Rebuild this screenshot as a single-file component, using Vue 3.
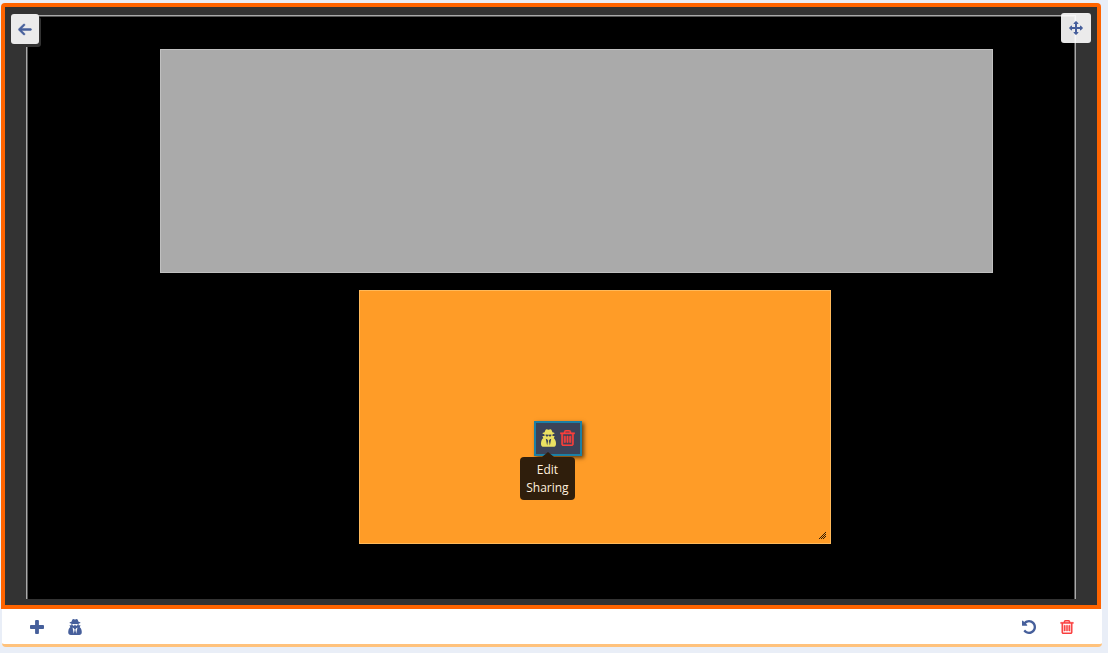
<script setup>
const icons = {
  back: {
    box: '-16 0 480 512',
    d: 'M9.4 233.4c-12.5 12.5-12.5 32.8 0 45.3l160 160c12.5 12.5 32.8 12.5 45.3 0s12.5-32.8 0-45.3L109.2 288 416 288c17.7 0 32-14.3 32-32s-14.3-32-32-32l-306.7 0L214.6 118.6c12.5-12.5 12.5-32.8 0-45.3s-32.8-12.5-45.3 0l-160 160z'
  },
  move: {
    box: '0 0 1792 1792',
    d: 'M1792 896q0 26-19 45l-256 256q-19 19-45 19t-45-19-19-45v-128h-384v384h128q26 0 45 19t19 45-19 45l-256 256q-19 19-45 19t-45-19l-256-256q-19-19-19-45t19-45 45-19h128v-384h-384v128q0 26-19 45t-45 19-45-19l-256-256q-19-19-19-45t19-45l256-256q19-19 45-19t45 19 19 45v128h384v-384h-128q-26 0-45-19t-19-45 19-45l256-256q19-19 45-19t45 19l256 256q19 19 19 45t-19 45-45 19h-128v384h384v-128q0-26 19-45t45-19 45 19l256 256q19 19 19 45z'
  },
  plus: {
    box: '192 192 1408 1408',
    d: 'M1600 800v192q0 40-28 68t-68 28h-416v416q0 40-28 68t-68 28h-192q-40 0-68-28t-28-68v-416h-416q-40 0-68-28t-28-68v-192q0-40 28-68t68-28h416v-416q0-40 28-68t68-28h192q40 0 68 28t28 68v416h416q40 0 68 28t28 68z'
  },
  spy: {
    box: '0 0 1408 1664',
    d: 'M576 1536l96-448-96-128-128-64zm256 0l128-640-128 64-96 128zm160-1010q-2-4-4-6-10-8-96-8-70 0-167 19-7 2-21 2t-21-2q-97-19-167-19-86 0-96 8-2 2-4 6 2 18 4 27 2 3 7.5 6.5t7.5 10.5q2 4 7.5 20.5t7 20.5 7.5 17 8.5 17 9 14 12 13.5 14 9.5 17.5 8 20.5 4 24.5 2q36 0 59-12.5t32.5-30 14.5-34.5 11.5-29.5 17.5-12.5h12q11 0 17.5 12.5t11.5 29.5 14.5 34.5 32.5 30 59 12.5q13 0 24.5-2t20.5-4 17.5-8 14-9.5 12-13.5 9-14 8.5-17 7.5-17 7-20.5 7.5-20.5q2-7 7.5-10.5t7.5-6.5q2-9 4-27zm416 879q0 121-73 190t-194 69h-874q-121 0-194-69t-73-190q0-61 4.5-118t19-125.5 37.5-123.5 63.5-103.5 93.5-74.5l-90-220h214q-22-64-22-128 0-12 2-32-194-40-194-96 0-57 210-99 17-62 51.5-134t70.5-114q32-37 76-37 30 0 84 31t84 31 84-31 84-31q44 0 76 37 36 42 70.5 114t51.5 134q210 42 210 99 0 56-194 96 7 81-20 160h214l-82 225q63 33 107.5 96.5t65.5 143.5 29 151.5 8 148.5z'
  },
  undo: {
    box: '128 128 1536 1536',
    d: 'M1664 896q0 156-61 298t-164 245-245 164-298 61q-172 0-327-72.5t-264-204.5q-7-10-6.5-22.5t8.5-20.5l137-138q10-9 25-9 16 2 23 12 73 95 179 147t225 52q104 0 198.5-40.5t163.5-109.5 109.5-163.5 40.5-198.5-40.5-198.5-109.5-163.5-163.5-109.5-198.5-40.5q-98 0-188 35.5t-160 101.5l137 138q31 30 14 69-17 40-59 40h-448q-26 0-45-19t-19-45v-448q0-42 40-59 39-17 69 14l130 129q107-101 244.5-156.5t284.5-55.5q156 0 298 61t245 164 164 245 61 298z'
  },
  trash: {
    box: '192 128 1408 1536',
    d: 'M704 736v576q0 14-9 23t-23 9h-64q-14 0-23-9t-9-23v-576q0-14 9-23t23-9h64q14 0 23 9t9 23zm256 0v576q0 14-9 23t-23 9h-64q-14 0-23-9t-9-23v-576q0-14 9-23t23-9h64q14 0 23 9t9 23zm256 0v576q0 14-9 23t-23 9h-64q-14 0-23-9t-9-23v-576q0-14 9-23t23-9h64q14 0 23 9t9 23zm128 724v-948h-896v948q0 22 7 40.5t14.5 27 10.5 8.5h832q3 0 10.5-8.5t14.5-27 7-40.5zm-672-1076h448l-48-117q-7-9-17-11h-317q-10 2-17 11zm928 32v64q0 14-9 23t-23 9h-96v948q0 83-47 143.5t-113 60.5h-832q-66 0-113-58.5t-47-141.5v-952h-96q-14 0-23-9t-9-23v-64q0-14 9-23t23-9h309l70-167q15-37 54-63t79-26h320q40 0 79 26t54 63l70 167h309q14 0 23 9t9 23z'
  }
}
</script>

<template>
  <main class="page">
    <section class="stage">
      <div class="canvas">
        <div class="widget grey"></div>
        <div class="widget orange">
          <div class="menu">
            <button class="share" type="button" aria-describedby="share-tip" aria-label="Edit Sharing">
              <svg :viewBox="icons.spy.box"><path :d="icons.spy.d" /></svg>
            </button>
            <button class="remove" type="button" aria-label="Delete item">
              <svg :viewBox="icons.trash.box"><path :d="icons.trash.d" /></svg>
            </button>
            <div id="share-tip" class="tip" role="tooltip">Edit Sharing</div>
          </div>
          <svg class="grip" viewBox="0 0 8 8" shape-rendering="crispEdges">
            <path d="M7 0h1v1h-1zM6 1h1v1h-1zM5 2h1v1h-1zM7 2h1v1h-1zM4 3h1v1h-1zM6 3h1v1h-1zM3 4h1v1h-1zM5 4h1v1h-1zM7 4h1v1h-1zM2 5h1v1h-1zM4 5h1v1h-1zM6 5h1v1h-1zM1 6h1v1h-1zM3 6h1v1h-1zM5 6h1v1h-1z" />
          </svg>
        </div>
      </div>
      <button class="corner back" type="button" aria-label="Back">
        <svg :viewBox="icons.back.box"><path :d="icons.back.d" /></svg>
      </button>
      <button class="corner move" type="button" aria-label="Move">
        <svg :viewBox="icons.move.box"><path :d="icons.move.d" /></svg>
      </button>
    </section>
    <footer class="bar">
      <div class="group">
        <button type="button" aria-label="Add">
          <svg :viewBox="icons.plus.box"><path :d="icons.plus.d" /></svg>
        </button>
        <button type="button" aria-label="Sharing">
          <svg class="tall" :viewBox="icons.spy.box"><path :d="icons.spy.d" /></svg>
        </button>
      </div>
      <div class="group">
        <button type="button" aria-label="Undo">
          <svg :viewBox="icons.undo.box"><path :d="icons.undo.d" /></svg>
        </button>
        <button class="danger" type="button" aria-label="Delete">
          <svg :viewBox="icons.trash.box"><path :d="icons.trash.d" /></svg>
        </button>
      </div>
    </footer>
  </main>
</template>

<style>
body {
  margin: 0;
  background: #e9eef7;
}
</style>

<style scoped>
* {
  box-sizing: border-box;
}
.page {
  display: flex;
  flex-direction: column;
  min-height: 100vh;
  padding: 3px 6px 6px 2px;
  font-family: "Open Sans", "Noto Sans", sans-serif;
}
button {
  display: flex;
  align-items: center;
  justify-content: center;
  padding: 0;
  border: 0;
  background: none;
  color: #465f9b;
  cursor: pointer;
}
svg {
  display: block;
  fill: currentColor;
}
.stage {
  position: relative;
  display: flex;
  flex: 1;
  margin: 0 1px 0 -1px;
  padding: 8px 21px 6px;
  border: 4px solid #ff6400;
  border-radius: 4px 4px 0 0;
  background: #333;
}
.canvas {
  position: relative;
  flex: 1;
  border: 1px solid #aaa;
  border-bottom: 0;
  background: #000;
  box-shadow: inset 1px 1px 0 #555, inset -1px 0 0 #555;
}
.corner {
  position: absolute;
  width: 30px;
  height: 30px;
  border-radius: 3px;
  background: #ebebeb;
}
.corner svg {
  width: 14px;
  height: 14px;
}
.back {
  top: 7px;
  left: 6px;
  width: 28px;
  box-shadow: 2px 3px 0 #333;
}
.move {
  top: 6px;
  right: 6px;
  background: rgba(255, 255, 255, 0.9);
}
.back svg {
  width: 14px;
  height: 15px;
  overflow: visible;
  stroke: currentColor;
  stroke-width: 18;
}
.widget {
  position: absolute;
}
.grey {
  top: 5.7%;
  left: 12.7%;
  width: 79.5%;
  height: 38.4%;
  border: 1px solid #c0c0c0;
  background: #aaa;
}
.orange {
  top: 47%;
  left: 31.7%;
  width: 45%;
  height: 43.6%;
  border: 1px solid #ffb95a;
  background: #ff9c27;
}
.menu {
  position: absolute;
  top: 51.5%;
  left: 37%;
  display: flex;
  align-items: center;
  gap: 4px;
  height: 35px;
  padding: 0 5px;
  border: 2px solid #1c80a5;
  background: #3b4358;
  box-shadow: 2px 2px 4px rgba(0, 0, 0, 0.6);
}
.share {
  color: #ebe262;
}
.share svg {
  width: 15px;
  height: 18px;
}
.remove {
  color: #fc403c;
}
.remove svg,
.danger svg {
  stroke: currentColor;
  stroke-width: 50;
}
.remove svg {
  width: 15px;
  height: 16px;
}
.tip {
  position: absolute;
  top: 34px;
  left: -16px;
  width: 55px;
  padding: 4px 6px 3px;
  border-radius: 4px;
  background: #2f1e0c;
  color: #fff0df;
  font-size: 12px;
  line-height: 18px;
  text-align: center;
}
.tip::before {
  content: "";
  position: absolute;
  top: -5px;
  left: 22px;
  border: solid transparent;
  border-width: 0 6px 5px;
  border-bottom-color: #2f1e0c;
}
.grip {
  position: absolute;
  right: 4px;
  bottom: 3px;
  width: 8px;
  height: 8px;
  color: #321d05;
}
.bar {
  display: flex;
  align-items: center;
  justify-content: space-between;
  height: 38px;
  padding: 1px 25px 0;
  border-bottom: 3px solid #ffc27c;
  border-radius: 0 0 4px 4px;
  background: #fff;
}
.group {
  display: flex;
  gap: 18px;
}
.bar button {
  width: 20px;
  height: 20px;
}
.bar svg {
  width: 14px;
  height: 14px;
}
.bar .tall {
  height: 16px;
}
.bar .danger {
  color: #fa3e3e;
}
</style>
